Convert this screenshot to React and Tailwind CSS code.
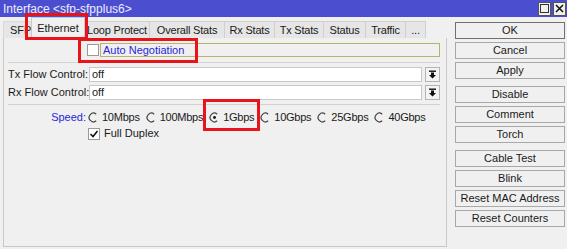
import React from 'react';

const tabs = [
  ['Loop Protect', 'w-[65px]'],
  ['Overall Stats', 'w-[75px]'],
  ['Rx Stats', 'w-[50px]'],
  ['Tx Stats', 'w-[49px]'],
  ['Status', 'w-[42px]'],
  ['Traffic', 'w-[40px]'],
  ['...', 'w-[20px]'],
];

const groups = [
  ['OK', 'Cancel', 'Apply'],
  ['Disable', 'Comment', 'Torch'],
  ['Cable Test', 'Blink', 'Reset MAC Address', 'Reset Counters'],
];

function Radio({ checked }) {
  return (
    <svg width="11" height="11" viewBox="0 0 11 11" className="shrink-0">
      <path d="M8.2 2.2 A4.3 4.3 0 1 0 8.2 8.8" fill="none" stroke="#444" strokeWidth="1.2" />
      {checked && <circle cx="5.5" cy="5.5" r="1.4" fill="#111" />}
    </svg>
  );
}

function Checkbox({ checked }) {
  return (
    <div className="w-[12px] h-[12px] border border-[#9a9a9a] bg-white flex items-center justify-center shrink-0">
      {checked && (
        <svg width="10" height="10" viewBox="0 0 10 10">
          <path d="M1.5 5 L4 7.5 L8.5 2" fill="none" stroke="#111" strokeWidth="1.6" />
        </svg>
      )}
    </div>
  );
}

function Combo({ label, value }) {
  return (
    <div className="flex items-center h-[14px]">
      <div className="w-[80px] shrink-0 text-right whitespace-nowrap">{label}</div>
      <div className="ml-[1px] flex-1 h-[15px] bg-white border border-[#c8c8c8] flex items-center px-[2px] leading-none">{value}</div>
      <div className="ml-[3px] w-[15px] h-[15px] border border-[#b4b4b4] bg-[#f4f4f4] flex items-center justify-center">
        <svg width="9" height="9" viewBox="0 0 9 9">
          <rect x="1" y="0.5" width="7" height="1.4" fill="#111" />
          <path d="M3 2.6 H6 V5 H8 L4.5 8.5 L1 5 H3 Z" fill="#111" />
        </svg>
      </div>
    </div>
  );
}

export default function App() {
  return (
    <div className="relative w-[567px] h-[249px] overflow-hidden bg-[#f0f0f0] text-[11px] text-[#1a1a1a]" style={{ fontFamily: '"Liberation Sans", Arial, sans-serif' }}>
      {/* Title */}
      <div className="h-[17px] bg-[#4b4fcf] flex items-center pl-[3px] pr-[1px]">
        <span className="text-[#ececff] text-[12px] leading-none">Interface &lt;sfp-sfpplus6&gt;</span>
        <div className="ml-auto flex gap-[2px]">
          <div className="w-[13px] h-[14px] bg-[#f0f0f0] border border-[#555] flex items-center justify-center">
            <div className="w-[9px] h-[9px] border border-[#333]" />
          </div>
          <div className="w-[13px] h-[14px] bg-[#f0f0f0] border border-[#555] flex items-center justify-center">
            <svg width="9" height="9" viewBox="0 0 9 9">
              <path d="M1 1 L8 8 M8 1 L1 8" stroke="#111" strokeWidth="1.5" />
            </svg>
          </div>
        </div>
      </div>

      <div className="flex">
        {/* Left part */}
        <div className="w-[447px] pl-[3px] flex flex-col">
          <div className="h-[21px] flex items-end">
            <div className="h-[17px] w-[28px] overflow-hidden bg-[#e6e6e6] border-t border-l border-[#d8d8d8] flex items-center pl-[6px] whitespace-nowrap">SFP</div>
            <div className="h-[21px] w-[54px] bg-[#f0f0f0] border-t border-l border-r border-[#c8c8c8] flex items-center justify-center">Ethernet</div>
            {tabs.map(([t, w]) => (
              <div key={t} className={`h-[17px] ${w} bg-[#e6e6e6] border-t border-r border-[#d0d0d0] flex items-center justify-center whitespace-nowrap tracking-[-0.2px]`}>{t}</div>
            ))}
          </div>
          <div className="h-[209px] border-l border-b border-r border-[#c8c8c8] pl-[4px] pr-[6px] pt-[5px] flex flex-col">
            <div className="flex items-center h-[14px]">
              <div className="ml-[79px]"><Checkbox /></div>
              <div className="ml-[1px] flex-1 h-[14px] border border-[#b9b46a] flex items-center pl-[2px] text-[#2626d8] leading-none">Auto Negotiation</div>
            </div>
            <div className="mt-[5px] h-[1px] bg-[#d2d2d2]" />
            <div className="mt-[4px]"><Combo label="Tx Flow Control:" value="off" /></div>
            <div className="mt-[4px]"><Combo label="Rx Flow Control:" value="off" /></div>
            <div className="mt-[5px] h-[1px] bg-[#d2d2d2]" />
            <div className="mt-[5px] flex items-center h-[14px]">
              <div className="w-[78px] text-right text-[#2626d8]">Speed:</div>
              <div className="ml-[2px] flex items-center gap-[6px] tracking-[-0.25px]">
                {['10Mbps', '100Mbps', '1Gbps', '10Gbps', '25Gbps', '40Gbps'].map((s) => (
                  <div key={s} className="flex items-center gap-[3px]">
                    <Radio checked={s === '1Gbps'} />
                    <span>{s}</span>
                  </div>
                ))}
              </div>
            </div>
            <div className="mt-[3px] flex items-center h-[13px]">
              <div className="ml-[80px]"><Checkbox checked /></div>
              <span className="ml-[4px]">Full Duplex</span>
            </div>
          </div>
        </div>

        {/* Buttons */}
        <div className="ml-[8px] w-[110px] pt-[5px] flex flex-col gap-[7px]">
          {groups.map((g, i) => (
            <div key={i} className="flex flex-col gap-[3px]">
              {g.map((b) => (
                <div key={b} className={`h-[17px] bg-[#f0f0f0] flex items-center justify-center border ${b === 'OK' ? 'border-[#707070]' : 'border-[#a8a8a8]'}`}>{b}</div>
              ))}
            </div>
          ))}
        </div>
      </div>

      {/* Red annotation boxes */}
      <div className="absolute left-[25px] top-[13px] w-[63px] h-[27px] border-[3px] border-[#e8141c]" />
      <div className="absolute left-[78px] top-[38px] w-[120px] h-[25px] border-[3px] border-[#e8141c]" />
      <div className="absolute left-[203px] top-[99px] w-[57px] h-[32px] border-[3px] border-[#e8141c]" />
    </div>
  );
}
